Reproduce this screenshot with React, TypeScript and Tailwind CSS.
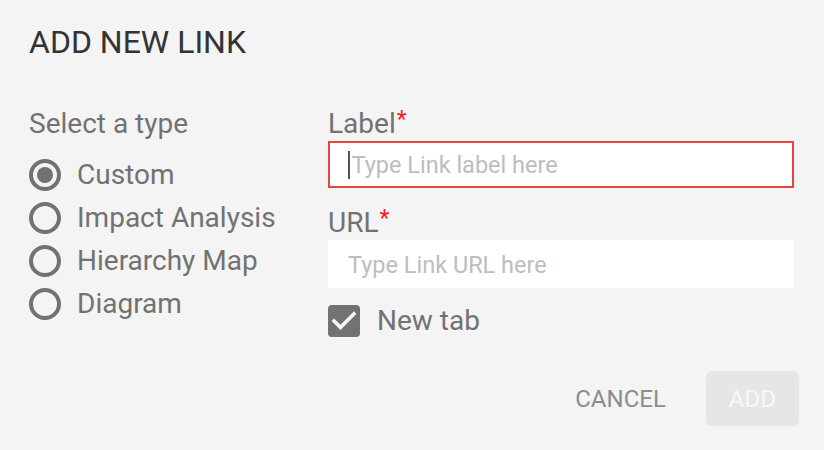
import { useState } from 'react';

const types = ['Custom', 'Impact Analysis', 'Hierarchy Map', 'Diagram'];

function Radio({ checked }: { checked: boolean }) {
  return (
    <span className="w-[32px] h-[32px] rounded-full border-[4px] border-[#727272] flex items-center justify-center shrink-0">
      {checked && <span className="w-[16px] h-[16px] rounded-full bg-[#727272]" />}
    </span>
  );
}

function FieldLabel({ text }: { text: string }) {
  return (
    <div className="h-[33px] leading-[33px] text-[28px] text-[#727272] flex">
      <span>{text}</span>
      <span className="text-[#ff1a1a] text-[23px] leading-[23px] ml-[1px] mt-[1px]">*</span>
    </div>
  );
}

export default function App() {
  const [selected, setSelected] = useState('Custom');
  const [newTab, setNewTab] = useState(true);

  return (
    <div
      className="w-[824px] h-[450px] bg-[#f4f4f4] pt-[23px] pl-[29px] pr-[25px]"
      style={{ fontFamily: 'Roboto, "Liberation Sans", sans-serif' }}
    >
      {/* Title */}
      <h1 className="h-[38px] leading-[38px] text-[32px] text-[#333333]">ADD NEW LINK</h1>

      <div className="grid grid-cols-[299px_466px] mt-[46px]">
        {/* Type picker */}
        <div>
          <div className="h-[33px] leading-[33px] text-[28px] text-[#727272]">Select a type</div>
          <div className="mt-[13px]">
            {types.map((t) => (
              <div
                key={t}
                className="h-[43px] flex items-center cursor-pointer"
                onClick={() => setSelected(t)}
              >
                <Radio checked={selected === t} />
                <span className="ml-[16px] text-[28px] leading-[44px] text-[#727272]">{t}</span>
              </div>
            ))}
          </div>
        </div>

        {/* Fields */}
        <div>
          <FieldLabel text="Label" />
          <div className="mt-[1px] h-[47px] bg-white border-2 border-[#e8453c] pl-[18px] flex items-center">
            <span className="w-[1.5px] h-[28px] bg-[#555555] mr-[2px]" />
            <span className="text-[23.5px] text-[#bdbdbd] pt-[3px]">Type Link label here</span>
          </div>

          <div className="mt-[18px]">
            <FieldLabel text="URL" />
          </div>
          <div className="mt-[1px] h-[48px] bg-white pl-[20px] flex items-center">
            <span className="text-[23.5px] text-[#bdbdbd] pt-[3px]">Type Link URL here</span>
          </div>

          <div
            className="mt-[17px] h-[32px] flex items-center cursor-pointer"
            onClick={() => setNewTab(!newTab)}
          >
            <svg width="32" height="32" viewBox="3 3 18 18" className="shrink-0">
              {newTab ? (
                <path
                  fill="#727272"
                  d="M19 3H5c-1.11 0-2 .9-2 2v14c0 1.1.89 2 2 2h14c1.11 0 2-.9 2-2V5c0-1.1-.89-2-2-2zm-9 14l-5-5 1.41-1.41L10 14.17l7.59-7.59L19 8l-9 9z"
                />
              ) : (
                <path
                  fill="#727272"
                  d="M19 5v14H5V5h14m0-2H5c-1.1 0-2 .9-2 2v14c0 1.1.9 2 2 2h14c1.1 0 2-.9 2-2V5c0-1.1-.9-2-2-2z"
                />
              )}
            </svg>
            <span className="ml-[17px] text-[28px] leading-[34px] text-[#727272]">New tab</span>
          </div>
        </div>
      </div>

      {/* Actions */}
      <div className="mt-[34px] flex justify-end gap-[17px]">
        <button className="h-[55px] px-[23px] text-[24px] text-[#8c8c8c] rounded-[6px]">CANCEL</button>
        <button className="h-[55px] px-[23px] text-[24px] text-[#f7f7f7] bg-[#e6e6e6] rounded-[6px]">ADD</button>
      </div>
    </div>
  );
}
